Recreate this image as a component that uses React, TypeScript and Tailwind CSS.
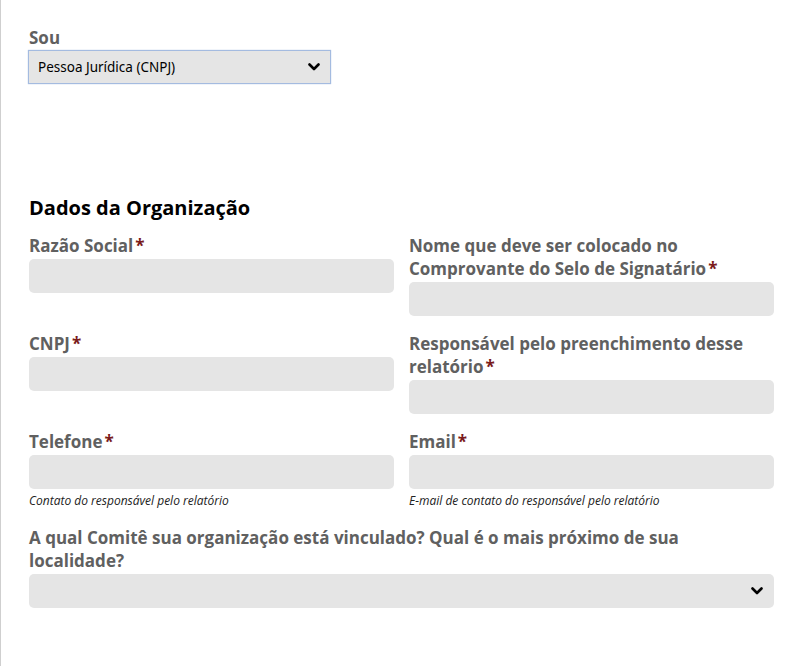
import React from 'react';

const labelCls = "block text-[17px] leading-[23px] font-bold text-[#606060] mb-[2px]";
const inputCls = "block w-full h-[34px] rounded-[5px] bg-[#e5e5e5] border-0 outline-none px-3";

const Star = () => <span className="text-[#7a1b1b] ml-[2px]">*</span>;

const Chevron = () => (
  <svg width="12" height="8" viewBox="0 0 12 8" className="text-black">
    <path d="M1.5 1.5 L6 6 L10.5 1.5" fill="none" stroke="currentColor" strokeWidth="2.6" strokeLinecap="round" strokeLinejoin="round" />
  </svg>
);

const Field = ({ label, help }: { label: string; help?: string }) => (
  <div>
    <label className={labelCls}>
      {label}
      <Star />
    </label>
    <input className={inputCls} />
    {help && (
      <p className="text-[12px] leading-[18px] italic text-[#222] mt-[3px]">{help}</p>
    )}
  </div>
);

export default function App() {
  return (
    <div
      className="min-h-[666px] bg-white border-l border-[#cfcfcf] pl-[28px] pr-[27px] pt-[26px]"
      style={{ fontFamily: '"Open Sans", "Noto Sans", sans-serif' }}
    >
      <label className="block text-[17px] leading-[23px] font-bold text-[#606060] mb-px">Sou</label>
      <div className="-ml-px w-[303px] h-[34px] bg-[#e5e5e5] border border-[#a4bbe0] flex items-center px-[9px] shadow-[0_0_1px_#a4bbe0]">
        <span className="text-[13.5px] text-black" style={{ fontFamily: '"Noto Sans", sans-serif' }}>
          Pessoa Jurídica (CNPJ)
        </span>
        <span className="ml-auto mr-[1px]">
          <Chevron />
        </span>
      </div>

      <h2 className="text-[20px] leading-[28px] font-bold text-black mt-[110px] mb-[12px]">
        Dados da Organização
      </h2>

      <div className="grid grid-cols-2 gap-x-[15px] gap-y-4 items-start">
        <Field label="Razão Social" />
        <Field label="Nome que deve ser colocado no Comprovante do Selo de Signatário" />
        <Field label="CNPJ" />
        <Field label="Responsável pelo preenchimento desse relatório" />
        <Field label="Telefone" help="Contato do responsável pelo relatório" />
        <Field label="Email" help="E-mail de contato do responsável pelo relatório" />
        <div className="col-span-2">
          <label className={`${labelCls} max-w-[735px]`}>
            A qual Comitê sua organização está vinculado? Qual é o mais próximo de sua localidade?
          </label>
          <div className="w-full h-[34px] rounded-[5px] bg-[#e5e5e5] flex items-center justify-end pr-[11px]">
            <Chevron />
          </div>
        </div>
      </div>
    </div>
  );
}
